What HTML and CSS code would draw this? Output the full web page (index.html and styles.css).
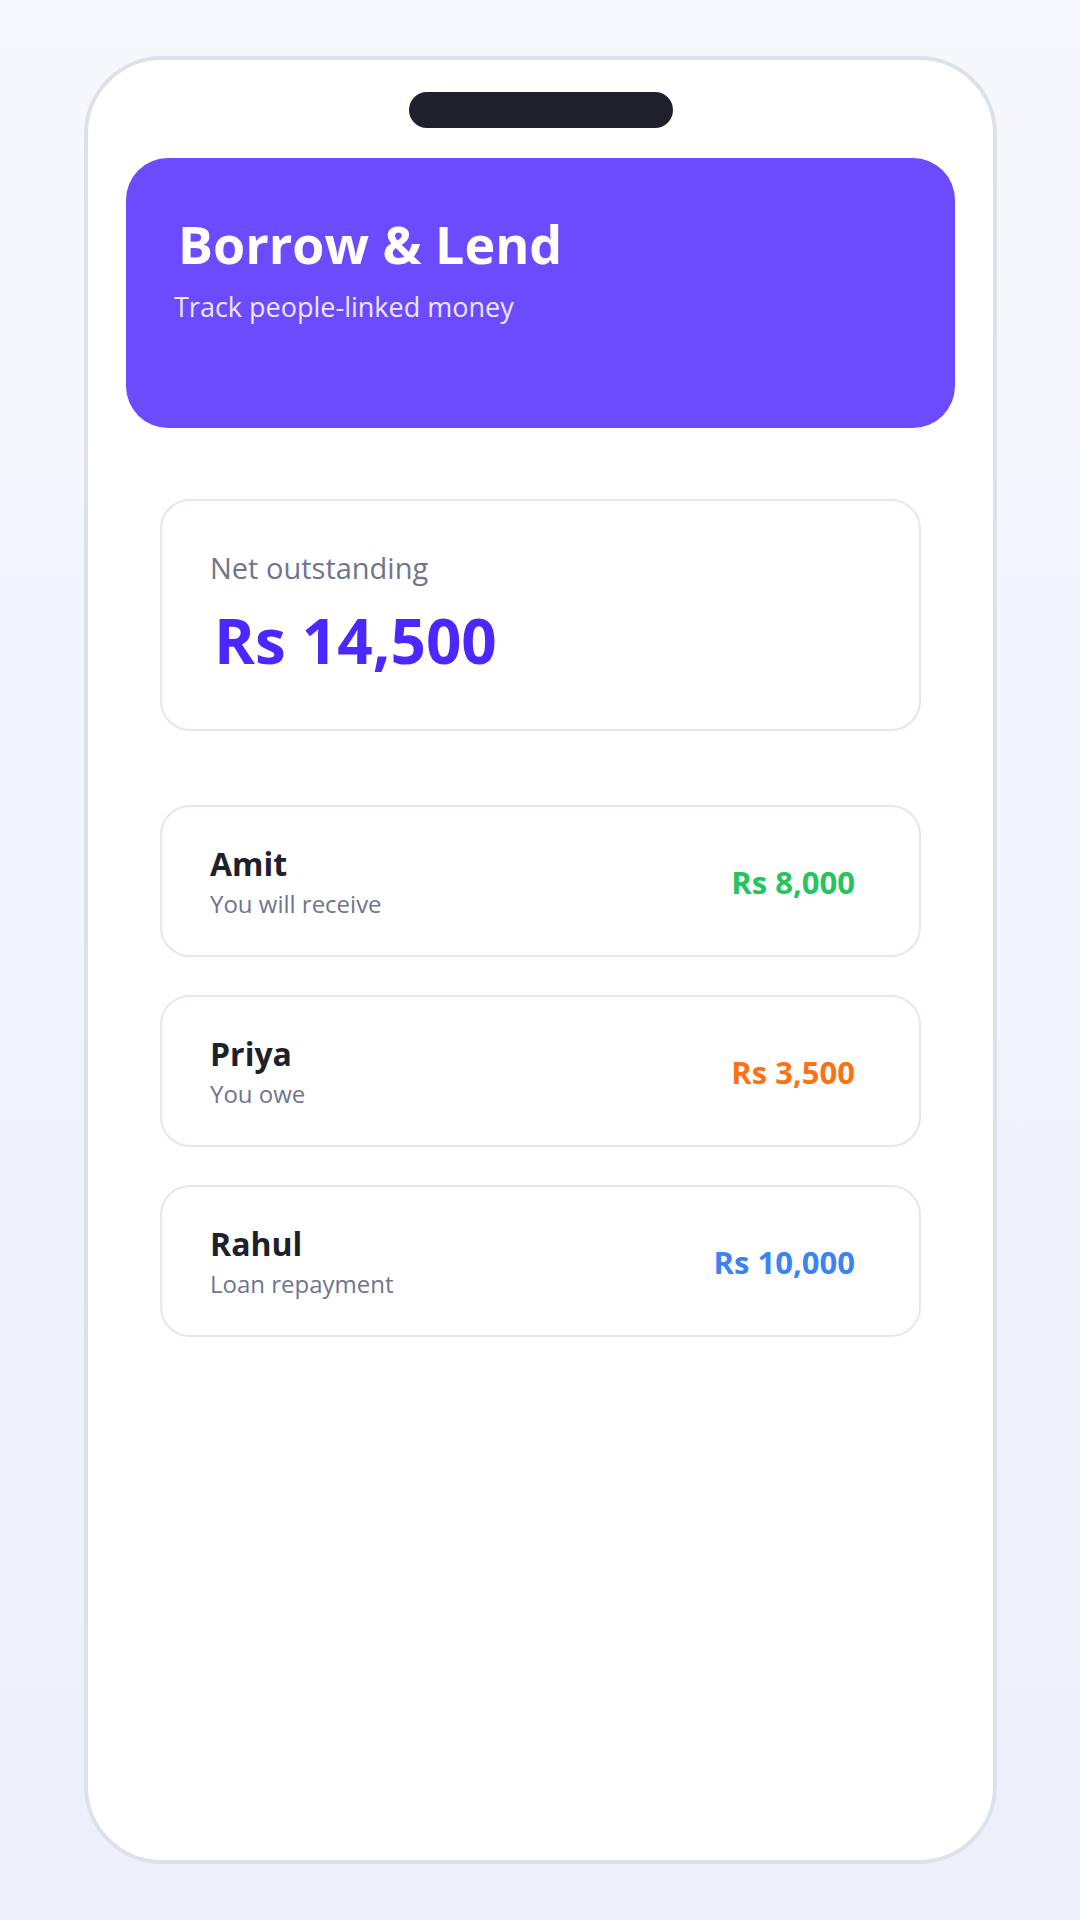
FILE: index.html
```html
<!DOCTYPE html>
<html lang="en">
<head>
    <meta charset="UTF-8">
    <meta name="viewport" content="width=device-width, initial-scale=1.0">
    <title>Borrow &amp; Lend</title>
    <link rel="stylesheet" href="styles.css">
</head>
<body>

<div class="phone">
    <div class="notch"></div>

    <header class="header">
        <h1 class="title">Borrow &amp; Lend</h1>
        <p class="subtitle">Track people-linked money</p>
    </header>

    <main class="content">
        <section class="card summary">
            <h2 class="label">Net outstanding</h2>
            <p class="total">Rs 14,500</p>
        </section>

        <ul class="people">
            <li class="card person">
                <div class="info">
                    <h3 class="name">Amit</h3>
                    <p class="note">You will receive</p>
                </div>
                <span class="amount receive">Rs 8,000</span>
            </li>
            <li class="card person">
                <div class="info">
                    <h3 class="name">Priya</h3>
                    <p class="note">You owe</p>
                </div>
                <span class="amount owe">Rs 3,500</span>
            </li>
            <li class="card person">
                <div class="info">
                    <h3 class="name">Rahul</h3>
                    <p class="note">Loan repayment</p>
                </div>
                <span class="amount loan">Rs 10,000</span>
            </li>
        </ul>
    </main>
</div>

</body>
</html>
```

FILE: styles.css
```css
* {
    box-sizing: border-box;
}

body {
    font-family: "Segoe UI", "Open Sans", "Noto Sans", sans-serif;
    display: flex;
    min-height: 100vh;
    margin: 0;
    padding: 56px 83px 56px 84px;
    background: linear-gradient(#f6f8fd, #edf0fa);
    color: #1e202c;
}

h1, h2, h3, p, ul {
    margin: 0;
    padding: 0;
}

.phone {
    flex: 1;
    background-color: #fff;
    border: 4px solid #dce1ec;
    border-radius: 78px;
    padding: 32px 38px;
}

.notch {
    width: 264px;
    height: 36px;
    margin: 0 auto 30px;
    background-color: #1e202c;
    border-radius: 18px;
}

.header {
    background-color: #6c4bff;
    border-radius: 42px;
    min-height: 270px;
    padding: 48px;
    color: #fff;
}

.title,
.total {
    padding-left: 4px;
    font-weight: 700;
}

.title {
    font-size: 52px;
    line-height: 76px;
}

.subtitle {
    font-size: 27px;
    line-height: 50px;
    color: #ece7ff;
}

.content {
    padding: 71px 34px 0;
}

.card {
    background-color: #fff;
    border: 2px solid #e7e4f5;
    border-radius: 30px;
    padding: 0 48px;
}

.summary {
    padding-top: 44px;
    padding-bottom: 40px;
    margin-bottom: 74px;
}

.label {
    font-size: 29px;
    line-height: 46px;
    font-weight: 400;
    color: #70758c;
}

.total {
    font-size: 62px;
    line-height: 98px;
    color: #4a28ff;
}

.people {
    display: flex;
    flex-direction: column;
    gap: 38px;
    list-style: none;
}

.person {
    display: flex;
    justify-content: space-between;
    align-items: center;
    min-height: 152px;
    padding-top: 2px;
    padding-right: 64px;
}

.name {
    font-size: 32px;
    line-height: 44px;
    font-weight: 700;
}

.note {
    font-size: 24px;
    line-height: 36px;
    color: #70758c;
}

.amount {
    font-size: 31px;
    line-height: 44px;
    font-weight: 700;
}

.receive {
    color: #22c55e;
}

.owe {
    color: #f97316;
}

.loan {
    color: #3b82f6;
}
```
